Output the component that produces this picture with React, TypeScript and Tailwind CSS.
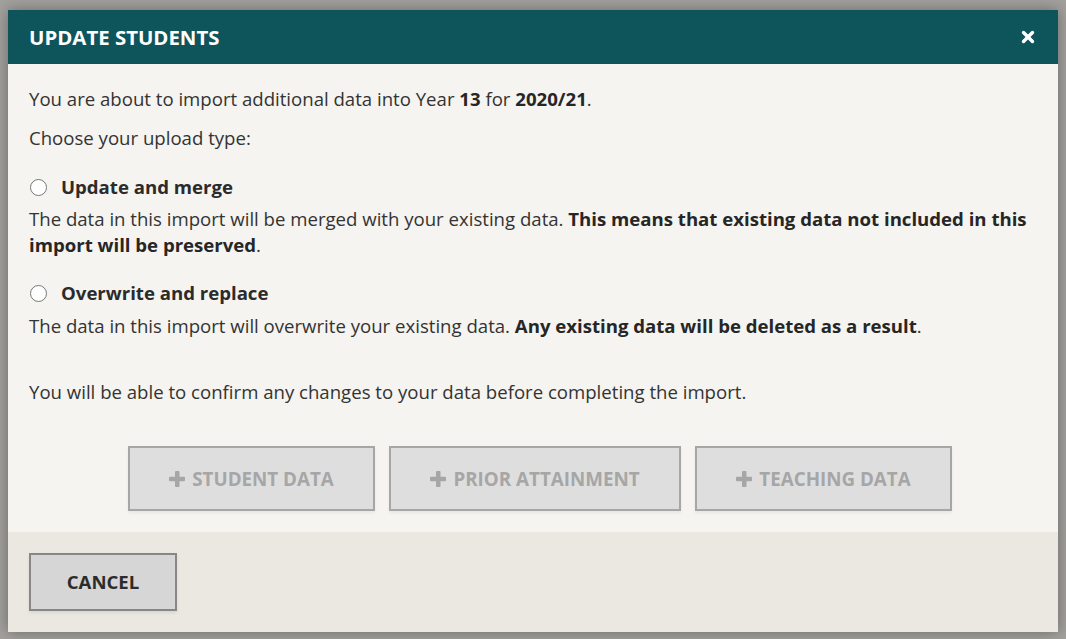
import { X } from 'lucide-react';

const PlusIcon = () => (
  <svg className="w-[16px] h-[16px]" viewBox="0 0 16 16" fill="currentColor">
    <rect x="6" y="0" width="4.5" height="16" rx="1" />
    <rect x="0" y="5.75" width="16" height="4.5" rx="1" />
  </svg>
);

const Radio = () => (
  <span className="block w-[17px] h-[17px] rounded-full border border-[#767676] bg-white shrink-0" />
);

const UploadButton = ({ label, width }: { label: string; width: string }) => (
  <button
    disabled
    className={`${width} h-[65px] flex items-center justify-center gap-[7px] border-2 border-[#a6a6a6] bg-[#dedede] text-[#a6a6a6] text-[18.8px] font-bold uppercase shadow-[0_2px_3px_rgba(0,0,0,0.06)] cursor-not-allowed`}
  >
    <PlusIcon />
    <span>{label}</span>
  </button>
);

export default function App() {
  return (
    <div
      className="w-full h-[639px] overflow-hidden bg-[#a3a19e] pt-[10px] pl-[8px]"
      style={{ fontFamily: '"Open Sans", "Noto Sans", sans-serif' }}
    >
      {/* Modal */}
      <div className="w-[1050px] h-[622px] flex flex-col bg-[#f5f4f0] shadow-[0_0_14px_rgba(0,0,0,0.35)]">
        {/* Cabecera */}
        <div className="h-[54px] shrink-0 bg-[#0d555b] flex items-center justify-between pl-[21px] pr-[21px]">
          <h2 className="text-[20.4px] font-bold text-white">UPDATE STUDENTS</h2>
          <X className="w-[18px] h-[18px] text-white" strokeWidth={4.5} />
        </div>

        {/* Cuerpo */}
        <div className="flex-1 px-[21px] pt-[22px] text-[18.6px] leading-[26px] text-[#333333]">
          <p>
            You are about to import additional data into Year <b className="text-[#262626]">13</b> for{' '}
            <b className="text-[#262626]">2020/21</b>.
          </p>
          <p className="mt-[13px]">Choose your upload type:</p>

          <div className="mt-[23px] flex items-center gap-[14px] pl-[1px]">
            <Radio />
            <span className="font-bold text-[#2b2b2b]">Update and merge</span>
          </div>
          <p className="mt-[6px]">
            The data in this import will be merged with your existing data.{' '}
            <b className="text-[#262626]">
              This means that existing data not included in this import will be preserved
            </b>
            .
          </p>

          <div className="mt-[22px] flex items-center gap-[14px] pl-[1px]">
            <Radio />
            <span className="font-bold text-[#2b2b2b]">Overwrite and replace</span>
          </div>
          <p className="mt-[7px]">
            The data in this import will overwrite your existing data.{' '}
            <b className="text-[#262626]">Any existing data will be deleted as a result</b>.
          </p>

          <p className="mt-[40px]">
            You will be able to confirm any changes to your data before completing the import.
          </p>

          <div className="mt-[41px] flex justify-center gap-[14px] pl-[14px]">
            <UploadButton label="Student Data" width="w-[247px]" />
            <UploadButton label="Prior Attainment" width="w-[292px]" />
            <UploadButton label="Teaching Data" width="w-[257px]" />
          </div>
        </div>

        {/* Pie */}
        <div className="h-[100px] shrink-0 bg-[#ebe8e1] px-[21px] pt-[21px]">
          <button className="w-[148px] h-[58px] border-2 border-[#878787] bg-[#d6d6d6] text-[18.6px] font-bold text-[#2c2c2c] shadow-[0_2px_3px_rgba(0,0,0,0.08)]">
            CANCEL
          </button>
        </div>
      </div>
    </div>
  );
}
